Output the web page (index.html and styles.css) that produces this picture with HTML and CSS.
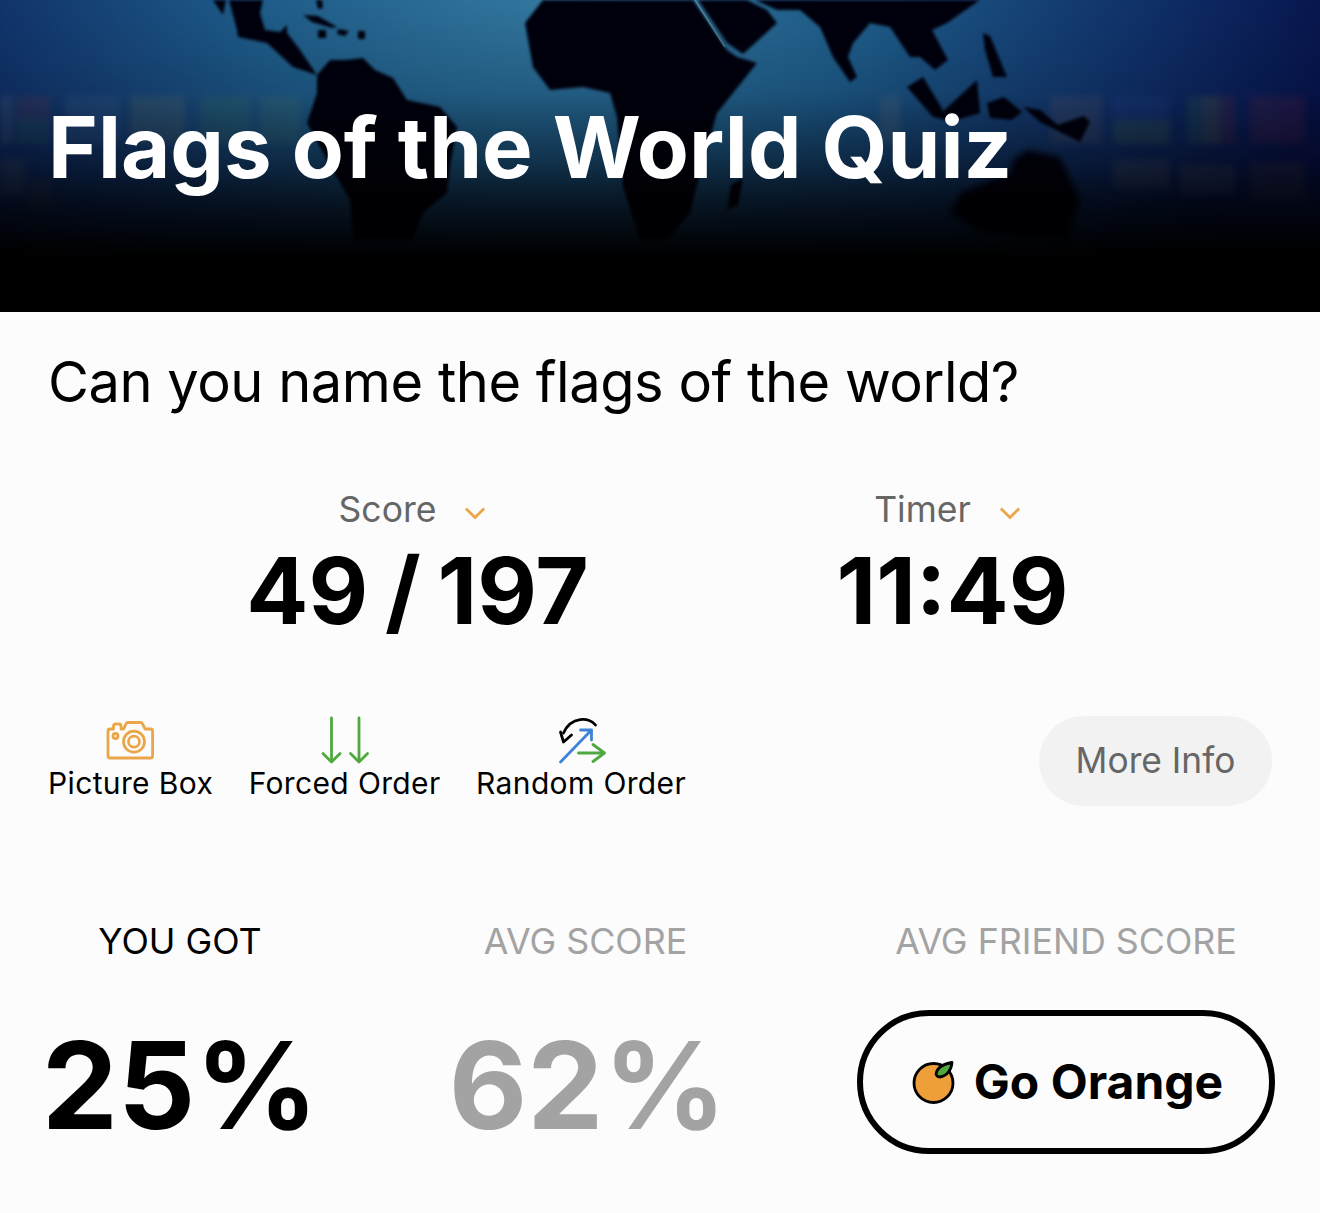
FILE: index.html
```html
<!DOCTYPE html>
<html lang="en">
<head>
<meta charset="utf-8">
<title>Flags of the World Quiz</title>
<link rel="stylesheet" href="styles.css">
</head>
<body>
<header class="hero">
  <svg class="hero-art" viewBox="0 0 1320 312" preserveAspectRatio="none" aria-hidden="true">
    <defs>
      <radialGradient id="glow" gradientUnits="userSpaceOnUse" cx="0" cy="0" r="1" gradientTransform="translate(560 0) scale(790 420)">
        <stop offset="0" stop-color="#33789f"/>
        <stop offset=".4" stop-color="#1d5a88"/>
        <stop offset=".75" stop-color="#0f2f68"/>
        <stop offset="1" stop-color="#06124a"/>
      </radialGradient>
      <linearGradient id="fade" x1="0" y1="0" x2="0" y2="1">
        <stop offset="0" stop-color="#000" stop-opacity="0"/>
        <stop offset=".3" stop-color="#000" stop-opacity=".12"/>
        <stop offset=".5" stop-color="#000" stop-opacity=".42"/>
        <stop offset=".65" stop-color="#000" stop-opacity=".72"/>
        <stop offset=".82" stop-color="#000" stop-opacity="1"/>
      </linearGradient>
      <filter id="soft" x="-5%" y="-5%" width="110%" height="110%"><feGaussianBlur stdDeviation="1.800"/></filter>
      <filter id="softer" x="-5%" y="-5%" width="110%" height="110%"><feGaussianBlur stdDeviation="3"/></filter>
    </defs>
    <rect width="1320" height="312" fill="url(#glow)"/>
    <g filter="url(#softer)" opacity=".13">
      <rect x="0" y="96" width="13" height="48" fill="#9aa08a"/>
      <rect x="16" y="96" width="34" height="24" fill="#b03a35"/><rect x="16" y="120" width="34" height="24" fill="#3f8a45"/>
      <rect x="65" y="96" width="55" height="48" fill="#6a86b0"/>
      <rect x="130" y="96" width="55" height="48" fill="#a8a060"/>
      <rect x="200" y="96" width="50" height="48" fill="#5a9a50"/>
      <rect x="260" y="96" width="40" height="48" fill="#6a9a60"/>
      <rect x="0" y="160" width="25" height="36" fill="#9a9a80"/><rect x="30" y="180" width="22" height="30" fill="#7a6050"/>
      <rect x="880" y="96" width="20" height="48" fill="#a08a80"/>
      <rect x="1050" y="96" width="52" height="48" fill="#a87a70"/>
      <rect x="1113" y="96" width="57" height="22" fill="#3a5ac0"/><rect x="1113" y="120" width="57" height="24" fill="#8ab040"/>
      <rect x="1187" y="96" width="16" height="48" fill="#50a040"/><rect x="1203" y="96" width="16" height="48" fill="#d0b030"/><rect x="1219" y="96" width="16" height="48" fill="#c03a30"/>
      <rect x="1250" y="96" width="55" height="48" fill="#b03040"/>
      <rect x="1113" y="160" width="57" height="28" fill="#b0a090"/>
      <rect x="1180" y="165" width="55" height="30" fill="#a0a090"/>
      <rect x="1250" y="162" width="55" height="40" fill="#907060"/>
    </g>
    <g fill="#01040c" filter="url(#soft)">
      <path d="M213 0L223 15 226 0ZM229 0L237 30 238 37 267 43 293 67 317 75 300 50 287 33 287 25 280 32 265 30 260 13 263 0Z"/>
      <path d="M303 15L318 16 337 27 332 28 312 22ZM318 30h8v8h-8zM338 29l11 2-4 5-8-2zM358 31h7v8h-7zM316 0h6l1 8-5 1z"/>
      <path d="M317 75L330 60 345 60 363 58 375 70 393 78 407 100 440 107 457 127 450 167 447 193 423 213 413 240 353 240 350 200 327 160 307 123 317 93Z"/>
      <path d="M543 0L525 23 533 67 550 90 583 87 610 93 617 117 623 187 640 240 667 240 690 213 700 173 717 113 757 63 737 57 727 50 693 0Z"/>
      <path d="M698 0L727 43 743 54 777 23 767 10 747 0Z"/>
      <path d="M727 210L731 185 743 178 738 205Z"/>
      <path d="M755 0L777 10 800 10 820 27 833 57 850 82 857 77 848 57 853 43 870 23 890 27 910 57 920 57 935 70 948 60 932 30 947 23 980 0Z"/>
      <path d="M907 87L923 77 940 105 947 120 933 117Z"/>
      <path d="M937 117L977 80 980 113 950 122Z"/>
      <path d="M983 33L990 36 1007 77 993 77 985 50Z"/>
      <path d="M987 103L1004 97 1022 112 1012 120 990 118ZM1023 107L1040 110 1058 125 1084 116 1090 122 1080 142 1060 132 1040 122Z"/>
    </g>
    <path d="M1013 160L1027 150 1060 157 1080 200 1067 240 980 233 950 213 960 193 1010 173Z" fill="#01040c" filter="url(#softer)"/>
    <path d="M695 0L725 47" stroke="#7fa6b0" stroke-width="1.500" fill="none" opacity=".55"/>
    <rect width="1320" height="312" fill="url(#fade)"/>
  </svg>
  <h1 class="title">Flags of the World Quiz</h1>
</header>

<main class="content">
  <p class="question">Can you name the flags of the world?</p>

  <section class="stats">
    <div class="stat">
      <div class="stat-label"><span>Score</span>
        <svg class="chevron" viewBox="0 0 24 14" aria-hidden="true"><path d="M2 2l10 10L22 2"/></svg>
      </div>
      <div class="stat-value">49 / 197</div>
    </div>
    <div class="stat">
      <div class="stat-label"><span>Timer</span>
        <svg class="chevron" viewBox="0 0 24 14" aria-hidden="true"><path d="M2 2l10 10L22 2"/></svg>
      </div>
      <div class="stat-value">11:49</div>
    </div>
  </section>

  <section class="options">
    <div class="option">
      <svg class="opt-icon" viewBox="0 0 50 50" aria-hidden="true">
        <g class="line camera">
          <path d="M4 13h3.500v-3a2 2 0 0 1 2-2h3.500a2 2 0 0 1 2 2v3h2.500l2.500-5a2 2 0 0 1 1.800-1.500h13a2 2 0 0 1 1.800 1.500l2.500 5h5.500a2 2 0 0 1 2 2v25a2 2 0 0 1-2 2H4a2 2 0 0 1-2-2V15a2 2 0 0 1 2-2z"/>
          <circle cx="28" cy="25.700" r="10.500"/><circle cx="28" cy="25.700" r="5.500"/><circle cx="9.500" cy="20" r="2.500"/>
        </g>
      </svg>
      <span>Picture Box</span>
    </div>
    <div class="option">
      <svg class="opt-icon" viewBox="0 0 50 50" aria-hidden="true">
        <g class="line green">
          <path d="M11.500 2v44M3 37.500l8.500 8.500 8.500-8.500M39 2v44M30.500 37.500l8.500 8.500 8.500-8.500"/>
        </g>
      </svg>
      <span>Forced Order</span>
    </div>
    <div class="option">
      <svg class="opt-icon" viewBox="0 0 50 50" aria-hidden="true">
        <g class="line">
          <path class="ink" d="M39.500 9C34 1 15 0 7.500 17"/>
          <path class="ink" d="M4.500 16l3 10 8-7"/>
          <path class="blue" d="M4.500 46L35.500 14M24.500 14h11v10"/>
          <path class="green" d="M22.500 37h26M37 28.500l11.500 8.500-11.500 8.500"/>
        </g>
      </svg>
      <span>Random Order</span>
    </div>
    <button class="more-info" type="button">More Info</button>
  </section>

  <section class="results">
    <div class="result">
      <div class="result-label you">YOU GOT</div>
      <div class="result-value you">25%</div>
    </div>
    <div class="result avg">
      <div class="result-label">AVG SCORE</div>
      <div class="result-value">62%</div>
    </div>
    <div class="result friend">
      <div class="result-label">AVG FRIEND SCORE</div>
      <button class="go-orange" type="button">
        <svg class="orange" viewBox="0 0 44 44" aria-hidden="true">
          <circle class="fruit" cx="21.500" cy="23" r="19.500"/>
          <path class="leaf" d="M24 14C25 8 31 4 40 2.500 39.500 10 35 16 28 17 26 17 24.500 16 24 14Z"/>
        </svg>
        <span>Go Orange</span>
      </button>
    </div>
  </section>
</main>
</body>
</html>
```

FILE: styles.css
```css
* { box-sizing: border-box; }

html, body {
  margin: 0;
  padding: 0;
  background: #fcfcfc;
}

body {
  height: 1213px;
  overflow: hidden;
  font-family: Inter, "Liberation Sans", sans-serif;
  color: #000;
}

.hero {
  position: relative;
  height: 312px;
  padding: 97px 48px 0;
  background: #000;
  overflow: hidden;
}

.hero-art {
  position: absolute;
  inset: 0;
  width: 100%;
  height: 100%;
  display: block;
}

.title {
  position: relative;
  margin: 0;
  font-size: 85px;
  line-height: 102px;
  font-weight: 700;
  color: #fff;
}

.content {
  padding: 0 48px;
}

.question {
  margin: 0;
  padding-top: 36px;
  font-size: 56px;
  line-height: 68px;
  letter-spacing: -0.47px;
  font-weight: 400;
}

.stats {
  display: grid;
  grid-template-columns: 535px 535px;
  margin: 73px 0 0 102px;
}

.stat {
  display: flex;
  flex-direction: column;
  align-items: center;
}

.stat-label {
  display: flex;
  align-items: center;
  gap: 28px;
  padding-right: 10px;
  font-size: 35.5px;
  line-height: 42px;
  color: #666;
}

.chevron {
  width: 22px;
  height: 14px;
  margin-top: 6px;
  fill: none;
  stroke: #eba64a;
  stroke-width: 3;
}

.stat-value {
  margin-top: 7px;
  font-size: 92px;
  line-height: 106px;
  word-spacing: -5px;
  font-weight: 700;
}

.options {
  display: flex;
  align-items: flex-start;
  gap: 35.5px;
  margin-top: 72px;
}

.option {
  display: flex;
  flex-direction: column;
  align-items: center;
  font-size: 30px;
  line-height: 35px;
  letter-spacing: 0.36px;
}

.opt-icon {
  width: 50px;
  height: 50px;
  display: block;
}

.line {
  fill: none;
  stroke-width: 2.8;
  stroke-linejoin: round;
  stroke-linecap: round;
}

.camera { stroke: #eba64a; }
.green { stroke: #4fa93f; }
.blue { stroke: #3f83d6; }
.ink { stroke: #000; }

.more-info {
  margin-left: auto;
  width: 233px;
  height: 90px;
  border: 0;
  border-radius: 45px;
  background: #f2f2f2;
  color: #666;
  font: 400 35.3px/42px Inter, "Liberation Sans", sans-serif;
}

.results {
  display: grid;
  grid-template-columns: 264px 271px 418px;
  column-gap: 137px;
  margin-top: 114px;
}

.result {
  display: flex;
  flex-direction: column;
  align-items: center;
}

.result.avg { padding-left: 2px; }
.result.avg .result-value { padding-left: 4px; }

.result-label {
  font-size: 35.8px;
  line-height: 42px;
  white-space: nowrap;
  color: #a3a3a3;
}

.result-label.you { color: #000; }

.result-value {
  margin-top: 51px;
  font-size: 121px;
  line-height: 145px;
  font-weight: 700;
  color: #a3a3a3;
}

.result-value.you { color: #000; }

.go-orange {
  display: flex;
  align-items: center;
  justify-content: center;
  gap: 18px;
  width: 418px;
  height: 144px;
  margin-top: 48px;
  padding: 0 0 0 3px;
  border: 6px solid #000;
  border-radius: 72px;
  background: transparent;
  color: #000;
  font: 700 48px/56px Inter, "Liberation Sans", sans-serif;
}

.orange {
  width: 44px;
  height: 44px;
}

.fruit {
  fill: #ef9f3a;
  stroke: #000;
  stroke-width: 2.8;
}

.leaf {
  fill: #4fa93f;
  stroke: #000;
  stroke-width: 2.8;
  stroke-linejoin: round;
}
```
